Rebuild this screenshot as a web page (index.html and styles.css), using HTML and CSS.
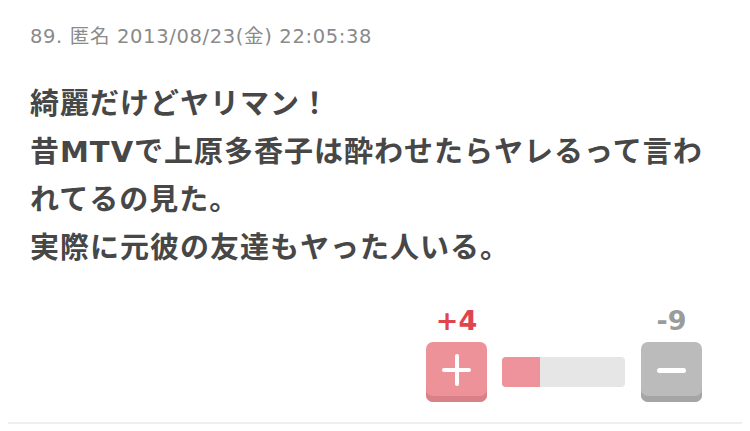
FILE: index.html
```html
<!DOCTYPE html>
<html lang="ja">
  <head>
    <meta charset="UTF-8" />
    <title>89. 匿名</title>
    <link rel="stylesheet" href="styles.css">
  </head>
  <body>
    <article class="comment">
      <p class="meta">89. 匿名 2013/08/23(金) 22:05:38</p>
      <p class="body">
        綺麗だけどヤリマン！<br>
        昔MTVで上原多香子は酔わせたらヤレるって言われてるの見た。<br>
        実際に元彼の友達もヤった人いる。
      </p>
      <div class="votes">
        <div class="vote vote-plus">
          <span class="count">+4</span>
          <button class="btn btn-plus" aria-label="plus"></button>
        </div>
        <div class="meter">
          <span class="meter-fill" style="width: 30.8%"></span>
        </div>
        <div class="vote vote-minus">
          <span class="count">-9</span>
          <button class="btn btn-minus" aria-label="minus"></button>
        </div>
      </div>
    </article>
  </body>
</html>
```

FILE: styles.css
```css
body {
  margin: 0;
  padding: 0;
  background-color: #fff;
  font-family: "DejaVu Sans", "Noto Sans CJK JP", sans-serif;
}
.comment {
  margin: 0 8px;
  padding: 24px 22px 20px;
  border-bottom: 2px solid #efefef;
}
.meta {
  margin: 0;
  color: #8a8a8a;
  font-size: 19.5px;
  line-height: 26px;
  letter-spacing: 0.65px;
}
.body {
  margin: 30px 0 0;
  color: #474747;
  font-family: "DejaVu Sans", "Noto Sans CJK JP", sans-serif;
  font-weight: bold;
  font-size: 29px;
  line-height: 48px;
  letter-spacing: 1px;
}
.votes {
  margin-top: 36px;
  padding-right: 18px;
  display: flex;
  justify-content: flex-end;
  align-items: flex-end;
}
.vote {
  display: flex;
  flex-direction: column;
  align-items: center;
  gap: 8px;
}
.count {
  font-weight: bold;
  font-size: 27px;
  line-height: 26px;
}
.vote-plus .count {
  color: #e0454f;
}
.vote-minus .count {
  color: #9b9b9b;
}
.btn {
  position: relative;
  width: 61px;
  height: 60px;
  padding: 0;
  border: 0;
  border-radius: 7px;
}
.btn-plus {
  background-color: #ee929a;
  box-shadow: inset 0 -6px 0 #d98089;
}
.btn-minus {
  background-color: #bbbbbb;
  box-shadow: inset 0 -6px 0 #a5a5a5;
}
.btn::before,
.btn::after {
  content: "";
  position: absolute;
  left: 50%;
  top: 28px;
  background-color: #fff;
  border-radius: 2px;
}
.btn::before {
  width: 29px;
  height: 4px;
  margin: -2px 0 0 -14.5px;
}
.btn-plus::after {
  width: 4px;
  height: 32px;
  margin: -16px 0 0 -2px;
}
.btn-minus::before {
  width: 29px;
  height: 5px;
  margin: -2.5px 0 0 -14.5px;
  border-radius: 3px;
}
.meter {
  width: 123px;
  height: 30px;
  margin: 0 16px 15px 15px;
  border-radius: 4px;
  background-color: #e6e6e6;
  overflow: hidden;
  display: flex;
}
.meter-fill {
  background-color: #ee939b;
}
```
